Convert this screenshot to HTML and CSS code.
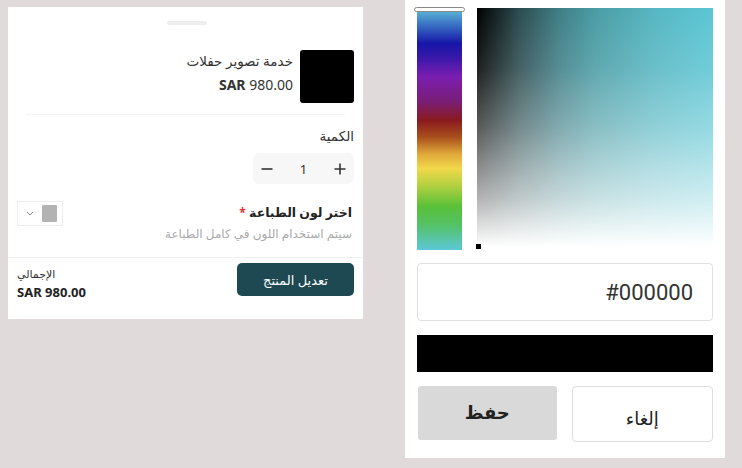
FILE: index.html
```html
<!DOCTYPE html>
<html lang="ar">
<head>
<meta charset="utf-8">
<title>Product</title>
<link rel="stylesheet" href="styles.css">
</head>
<body>
<div class="page">
  <section class="card">
    <div class="handle"></div>
    <div class="product">
      <div class="product-info">
        <div class="product-title" dir="rtl">خدمة تصوير حفلات</div>
        <div class="product-price"><b>SAR</b> 980.00</div>
      </div>
      <div class="product-image"></div>
    </div>
    <div class="divider"></div>
    <div class="label" dir="rtl">الكمية</div>
    <div class="stepper-row">
      <div class="stepper">
        <span class="step-btn"><svg width="12" height="12" viewBox="0 0 12 12"><path d="M0.5 6h11" stroke="#333" stroke-width="1.6"/></svg></span>
        <span class="step-val">1</span>
        <span class="step-btn"><svg width="12" height="12" viewBox="0 0 12 12"><path d="M0.5 6h11M6 0.5v11" stroke="#333" stroke-width="1.6"/></svg></span>
      </div>
    </div>
    <div class="color-row">
      <div class="select">
        <span class="chev"><svg width="8" height="5" viewBox="0 0 8 5"><path d="M1 1l3 3 3-3" fill="none" stroke="#888" stroke-width="1"/></svg></span>
        <span class="swatch"></span>
      </div>
      <div class="color-text" dir="rtl">
        <div class="color-title">اختر لون الطباعة <span class="req">*</span></div>
        <div class="color-sub">سيتم استخدام اللون في كامل الطباعة</div>
      </div>
    </div>
    <div class="footer">
      <div class="total">
        <div class="total-label" dir="rtl">الإجمالي</div>
        <div class="total-price">SAR 980.00</div>
      </div>
      <button class="edit-btn" dir="rtl">تعديل المنتج</button>
    </div>
  </section>

  <section class="picker-panel">
    <div class="picker-top">
      <div class="hue-wrap">
        <div class="hue-handle"></div>
        <div class="hue"></div>
      </div>
      <div class="sv">
        <div class="sv-marker"></div>
      </div>
    </div>
    <div class="hex-input">#000000</div>
    <div class="preview"></div>
    <div class="actions">
      <button class="btn-save" dir="rtl">حفظ</button>
      <button class="btn-cancel" dir="rtl">إلغاء</button>
    </div>
  </section>
</div>
</body>
</html>
```
FILE: styles.css
```css
* { box-sizing: border-box; }
html, body { margin: 0; padding: 0; }
body {
  background: #e1dada;
  font-family: "Noto Sans", "DejaVu Sans", sans-serif;
  color: #333;
  width: 742px;
  height: 468px;
  overflow: hidden;
}
.page {
  display: flex;
  align-items: flex-start;
}
.card {
  margin: 7px 0 0 8px;
  width: 355px;
  height: 312px;
  background: #fff;
  padding-top: 14px;
  display: flex;
  flex-direction: column;
}
.handle {
  width: 40px;
  height: 4px;
  border-radius: 2px;
  background: #eeeeee;
  align-self: center;
  margin-left: 3px;
}
.product {
  margin-top: 25px;
  display: flex;
  justify-content: flex-end;
  gap: 7px;
  padding-right: 9px;
}
.product-info {
  text-align: right;
  padding-top: 2px;
}
.product-title {
  font-size: 13.5px;
  line-height: 19px;
  color: #333;
}
.product-price {
  font-size: 14px;
  line-height: 18px;
  margin-top: 5px;
  color: #333;
}
.product-price b { font-weight: 700; }
.product-image {
  width: 54px;
  height: 53px;
  background: #000;
  border-radius: 3px;
}
.divider {
  margin: 11px 18px 0 18px;
  height: 1px;
  background: #f4f4f4;
}
.label {
  margin-top: 12px;
  padding-right: 9px;
  font-size: 13.5px;
  line-height: 18px;
  text-align: right;
}
.stepper-row {
  display: flex;
  justify-content: flex-end;
  padding-right: 9px;
  margin-top: 8px;
}
.stepper {
  width: 101px;
  height: 31px;
  background: #f7f7f7;
  border-radius: 6px;
  display: flex;
  align-items: center;
  justify-content: space-between;
  padding: 0 8px;
}
.step-btn {
  display: flex;
  align-items: center;
}
.step-val {
  font-size: 13px;
  color: #333;
}
.color-row {
  display: flex;
  justify-content: space-between;
  align-items: flex-start;
  padding: 0 11px 0 9px;
  margin-top: 17px;
}
.select {
  width: 46px;
  height: 25px;
  border: 1px solid #eeeeee;
  display: flex;
  align-items: center;
  justify-content: flex-end;
  gap: 8px;
  padding-right: 5px;
}
.chev { display: flex; align-items: center; }
.swatch {
  width: 15px;
  height: 17px;
  background: #b3b3b3;
  border-radius: 1px;
}
.color-text { text-align: right; padding-top: 3px; }
.color-title {
  font-size: 12.5px;
  font-weight: 700;
  line-height: 18px;
  color: #222;
}
.req { color: #d33; font-size: 12px; }
.color-sub {
  font-size: 12px;
  line-height: 16px;
  color: #aaa;
  margin-top: 4px;
}
.footer {
  margin-top: auto;
  height: 62px;
  border-top: 1px solid #f0f0f0;
  display: flex;
  justify-content: space-between;
  align-items: flex-start;
  padding: 5px 9px 0 9px;
}
.total { padding-top: 4px; }
.total-label {
  font-size: 11px;
  line-height: 14px;
  color: #333;
  text-align: left;
}
.total-price {
  font-size: 13px;
  font-weight: 700;
  line-height: 16px;
  margin-top: 3px;
  color: #222;
}
.edit-btn {
  width: 117px;
  height: 33px;
  border: none;
  border-radius: 5px;
  background: #1e4953;
  color: #fff;
  font-family: "Noto Sans", "DejaVu Sans", sans-serif;
  font-size: 13px;
  padding: 0;
}

.picker-panel {
  margin-left: 42px;
  width: 320px;
  height: 458px;
  background: #fff;
  padding: 7px 12px 0 12px;
  display: flex;
  flex-direction: column;
}
.picker-top {
  display: flex;
  gap: 15px;
  height: 243px;
}
.hue-wrap {
  position: relative;
  width: 45px;
  padding-top: 3px;
}
.hue-handle {
  position: absolute;
  left: -3px;
  top: 0;
  width: 51px;
  height: 5px;
  border: 1px solid #888;
  border-radius: 3px;
  background: #fff;
}
.hue {
  height: 240px;
  background: linear-gradient(to bottom,
    #5cb8d6 0%,
    #3a72c4 6%,
    #1616a8 14%,
    #3a18aa 20%,
    #7a1eb0 28%,
    #7a1e78 38%,
    #8a1a1e 46%,
    #a8501c 53%,
    #e0a83a 60%,
    #f2d84a 66%,
    #b4d040 73%,
    #58c038 82%,
    #54c26a 90%,
    #5cc8d8 100%);
}
.sv {
  position: relative;
  flex: 1;
  margin-top: 1px;
  height: 239px;
  background:
    linear-gradient(to bottom, rgba(255,255,255,0) 0%, rgba(255,255,255,0.12) 25%, rgba(255,255,255,0.35) 50%, rgba(255,255,255,0.7) 80%, #fff 100%),
    linear-gradient(to right, #000 0%, #2c4c50 18%, #3f7e86 35%, #4a9ca4 50%, #56b6c2 75%, #5cc6d4 100%);
}
.sv-marker {
  position: absolute;
  left: -1px;
  bottom: -2px;
  width: 5px;
  height: 5px;
  background: #000;
}
.hex-input {
  margin-top: 13px;
  height: 58px;
  border: 1px solid #e0e0e0;
  border-radius: 4px;
  font-family: Roboto, "Noto Sans", sans-serif;
  font-size: 22px;
  color: #333;
  display: flex;
  align-items: center;
  justify-content: flex-end;
  padding-right: 19px;
}
.preview {
  margin-top: 14px;
  height: 37px;
  background: #000;
}
.actions {
  margin-top: 14px;
  display: flex;
  gap: 15px;
}
.btn-save {
  width: 139px;
  height: 54px;
  border: none;
  border-radius: 3px;
  background: #d9d9d9;
  font-family: "DejaVu Sans", sans-serif;
  font-size: 18px;
  font-weight: 700;
  color: #222;
  padding: 0 0 2px 0;
  margin-left: 1px;
}
.btn-cancel {
  width: 142px;
  height: 56px;
  border: 1px solid #dddddd;
  border-radius: 4px;
  background: #fff;
  font-family: "DejaVu Sans", sans-serif;
  font-size: 18px;
  color: #222;
  padding: 8px 0 0 0;
}
```
